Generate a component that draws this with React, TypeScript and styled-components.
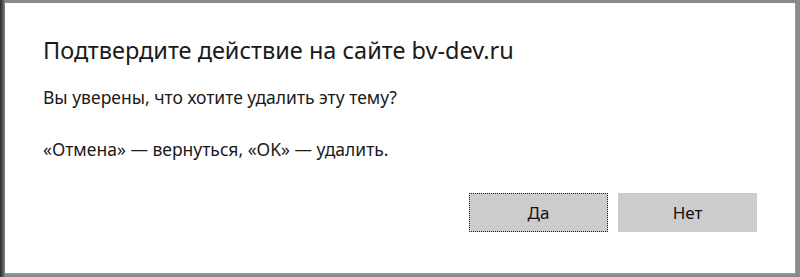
import * as React from "react";
import styled, { createGlobalStyle } from "styled-components";

const GlobalStyle = createGlobalStyle`
  html, body {
    margin: 0;
    padding: 0;
    width: 800px;
    height: 277px;
    overflow: hidden;
    background: #3b3f40;
  }
`;

export default function App() {
  return (
    <>
      <GlobalStyle />
      <Backdrop>
        <Dialog>
          <Title>Подтвердите действие на сайте bv-dev.ru</Title>
          <Message>Вы уверены, что хотите удалить эту тему?</Message>
          <Message>«Отмена» — вернуться, «OK» — удалить.</Message>
          <Buttons>
            <Button $focused>Да</Button>
            <Button>Нет</Button>
          </Buttons>
        </Dialog>
      </Backdrop>
    </>
  );
}

const Backdrop = styled.div`
  width: 800px;
  height: 277px;
  box-sizing: border-box;
  padding: 3px 5px 4px 5px;
  background: linear-gradient(90deg, #2a2d2e 0, #55595a 3px, #8a8c8c 5px);
  display: flex;
`;

const Dialog = styled.div`
  flex: 1;
  background: #ffffff;
  box-shadow: 1px 1px 0 #9a9a9a;
  padding: 32px 38px 0 38px;
  display: flex;
  flex-direction: column;
  font-family: "Noto Sans", "Open Sans", sans-serif;
  color: #1a1a1a;
`;

const Title = styled.div`
  font-size: 23.5px;
  line-height: 30px;
  margin-bottom: 20px;
`;

const Message = styled.div`
  font-size: 17.5px;
  line-height: 24px;
  margin-bottom: 28px;
`;

const Buttons = styled.div`
  display: flex;
  justify-content: flex-end;
  gap: 10px;
  margin-top: 4px;
`;

const Button = styled.button<{ $focused?: boolean }>`
  width: 139px;
  height: 39px;
  background: #cccccc;
  border: 1px solid ${(p) => (p.$focused ? "transparent" : "#cccccc")};
  outline: ${(p) => (p.$focused ? "1px dotted #222" : "none")};
  outline-offset: -1px;
  font-family: "Noto Sans", sans-serif;
  font-size: 17px;
  color: #111;
  padding: 0;
`;
